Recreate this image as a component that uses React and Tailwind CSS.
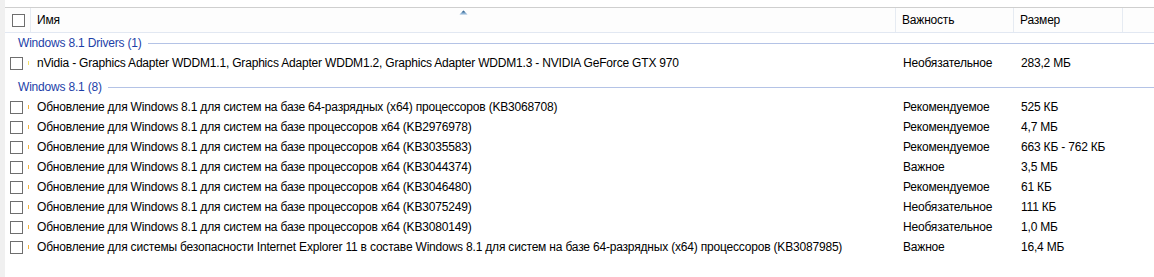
const GROUPS = [
  {
    title: 'Windows 8.1 Drivers (1)',
    items: [
      {
        name: 'nVidia - Graphics Adapter WDDM1.1, Graphics Adapter WDDM1.2, Graphics Adapter WDDM1.3 - NVIDIA GeForce GTX 970',
        level: 'Необязательное',
        size: '283,2 МБ',
        mark: 'bg-[#f3e06a]',
      },
    ],
  },
  {
    title: 'Windows 8.1 (8)',
    items: [
      { name: 'Обновление для Windows 8.1 для систем на базе 64-разрядных (x64) процессоров (KB3068708)', level: 'Рекомендуемое', size: '525 КБ' },
      { name: 'Обновление для Windows 8.1 для систем на базе процессоров x64 (KB2976978)', level: 'Рекомендуемое', size: '4,7 МБ' },
      { name: 'Обновление для Windows 8.1 для систем на базе процессоров x64 (KB3035583)', level: 'Рекомендуемое', size: '663 КБ - 762 КБ' },
      { name: 'Обновление для Windows 8.1 для систем на базе процессоров x64 (KB3044374)', level: 'Важное', size: '3,5 МБ' },
      { name: 'Обновление для Windows 8.1 для систем на базе процессоров x64 (KB3046480)', level: 'Рекомендуемое', size: '61 КБ' },
      { name: 'Обновление для Windows 8.1 для систем на базе процессоров x64 (KB3075249)', level: 'Необязательное', size: '111 КБ' },
      { name: 'Обновление для Windows 8.1 для систем на базе процессоров x64 (KB3080149)', level: 'Необязательное', size: '1,0 МБ' },
      { name: 'Обновление для системы безопасности Internet Explorer 11 в составе Windows 8.1 для систем на базе 64-разрядных (x64) процессоров (KB3087985)', level: 'Важное', size: '16,4 МБ' },
    ],
  },
];

const Box = ({ className = '' }) => (
  <span className={`block h-[13px] w-[13px] border border-[#6e6e6e] bg-white ${className}`} />
);

const Row = ({ item }) => (
  <div className="flex h-[20px] items-center">
    <div className="flex w-[26px] shrink-0 items-center pl-[5px]">
      <Box />
    </div>
    <div className="flex w-[865px] shrink-0 items-center">
      <span className={`ml-[-3px] block h-[4px] w-[1px] ${item.mark || 'bg-[#f2b23c]'}`} />
      <span className="ml-[8px] whitespace-nowrap">{item.name}</span>
    </div>
    <div className="w-[118px] shrink-0 pl-[7px] whitespace-nowrap">{item.level}</div>
    <div className="w-[109px] shrink-0 pl-[7px] whitespace-nowrap">{item.size}</div>
  </div>
);

const App = () => {
  return (
    <div
      className="flex h-[277px] w-[1154px] overflow-hidden bg-white text-[12px] tracking-[-0.19px] text-black"
      style={{ fontFamily: '"Liberation Sans", Arial, sans-serif' }}
    >
      {/* left frame */}
      <div className="w-[5px] shrink-0 bg-[#f0f0f0]" />

      <div className="flex min-w-0 flex-1 flex-col">
        <div className="h-[7px] shrink-0" />

        {/* column header */}
        <div className="relative flex h-[26px] shrink-0 border-t border-b border-t-[#cfcfcf] border-b-[#e2e8f2] bg-[#fdfdfd]">
          <div className="flex w-[26px] shrink-0 items-center border-r border-[#e6ebf2] pl-[7px]">
            <Box />
          </div>
          <div className="flex w-[865px] shrink-0 items-center border-r border-[#e6ebf2] pl-[6px]">Имя</div>
          <div className="flex w-[118px] shrink-0 items-center border-r border-[#e6ebf2] pl-[6px]">Важность</div>
          <div className="flex w-[109px] shrink-0 items-center border-r border-[#e6ebf2] pl-[6px]">Размер</div>
          <div className="flex-1" />
          <svg className="absolute left-[454px] top-[2px]" width="9" height="5" viewBox="0 0 9 5">
            <path d="M4.5 0.5 L8.5 4.5 L0.5 4.5 Z" fill="#8fb4d6" />
            <path d="M4.5 0.5 L6.5 2.5 L2.5 2.5 Z" fill="#3f6d96" />
          </svg>
        </div>

        {/* groups */}
        {GROUPS.map((g, gi) => (
          <div key={g.title} className={gi > 0 ? 'mt-[4px]' : ''}>
            <div className="flex h-[20px] items-center pl-[13px]">
              <span className="whitespace-nowrap text-[#1d3fa8]">{g.title}</span>
              <span className="ml-[6px] h-px flex-1 bg-[#b4c3e6]" />
            </div>
            {g.items.map((it) => (
              <Row key={it.name} item={it} />
            ))}
          </div>
        ))}
      </div>
    </div>
  );
};

export default App;
